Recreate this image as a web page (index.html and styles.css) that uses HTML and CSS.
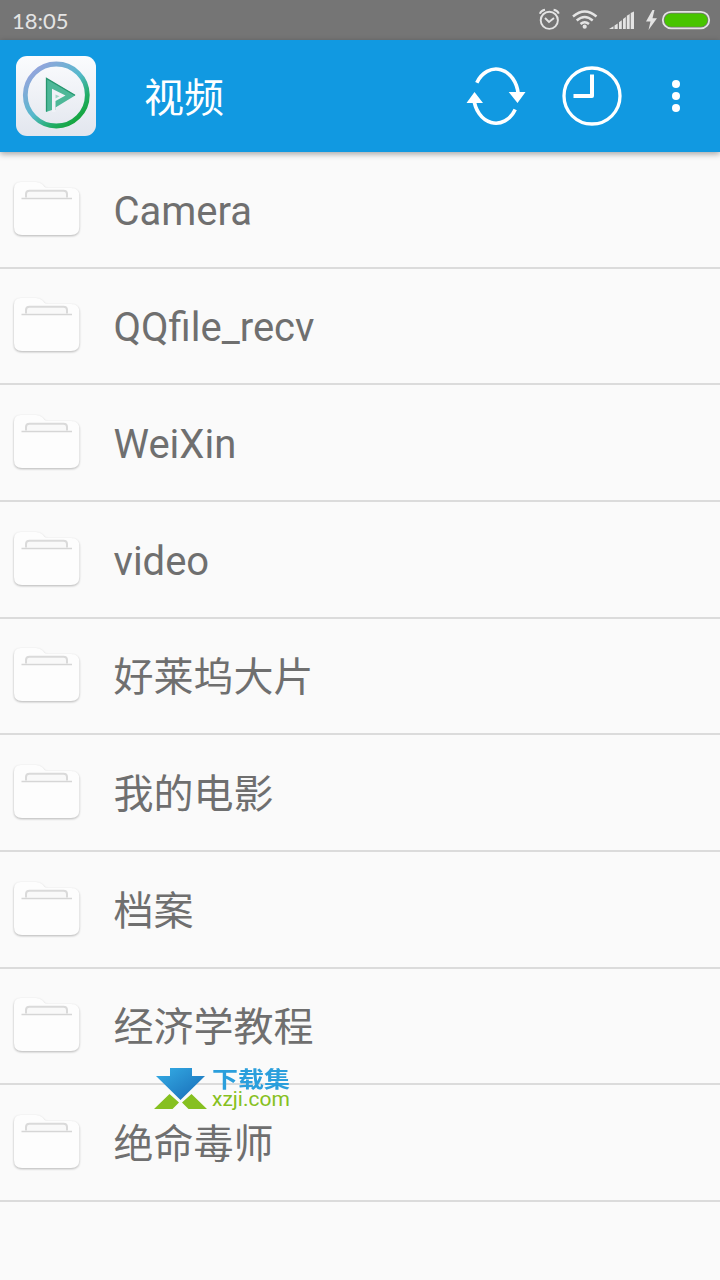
FILE: index.html
```html
<!DOCTYPE html>
<html lang="zh-CN">
<head>
    <meta charset="UTF-8">
    <meta name="viewport" content="width=device-width, initial-scale=1.0">
    <title>视频</title>
    <link rel="stylesheet" href="styles.css">
</head>
<body>
    <!-- shared folder icon -->
    <svg class="defs" width="0" height="0">
        <symbol id="folder" viewBox="0 0 72 62">
            <path d="M3 9Q3 2 10 2H25Q29 2 32 5L33.500 7Q35 8 37 8H60Q68.300 8 68.300 16V47Q68.300 55 60 55H11Q3 55 3 47Z" fill="#fdfdfd"/>
            <path d="M15 17.500V14Q15 10.700 18.500 10.700H52.500Q56 10.700 56 14V17.500" fill="#f9f9f9" stroke="#dadada" stroke-width="2"/>
            <path d="M10.500 18.500H61" stroke="#d6d6d6" stroke-width="1.500"/>
        </symbol>
    </svg>

    <div class="status-bar">
        <span class="time">18:05</span>
        <div class="status-icons">
            <svg width="181" height="40" viewBox="539 0 181 40" fill="none" stroke="#e4e4e4">
                <circle cx="549.300" cy="20.300" r="8.600" stroke-width="1.900"/>
                <path d="M545 18l4 4 5-4" stroke-width="1.900"/>
                <path d="M539.800 13.700Q541 10.500 545 9.800M553.600 9.800Q557.600 10.500 558.800 13.700" stroke-width="1.900"/>
                <path d="M573 16.500Q584.700 6.500 596.500 16.500M576.700 20.500Q584.700 13.500 592.700 20.500M580.500 24Q584.700 20.300 589 24" stroke-width="2.400"/>
                <circle cx="584.700" cy="26.700" r="2.100" fill="#e4e4e4" stroke="none"/>
                <path d="M609 29L613.500 26.300V29ZM614.500 29V25.500L617.700 23.500V29ZM619 29V22.300L621.800 20.300V29ZM623 29V19L625.800 17V29ZM626.800 29V15.800L629.700 14V29ZM630.700 29V13L634 11.500V29Z" fill="#e4e4e4" stroke="none"/>
                <path d="M652.500 10L646 21.500H650.500L648.500 30L657 18.300H652.500L654.500 10Z" fill="#e4e4e4" stroke="none"/>
                <rect x="662.800" y="11.800" width="46.400" height="16.600" rx="8.300" stroke-width="1.800"/>
                <rect x="664.500" y="13.500" width="43" height="13.200" rx="6.600" fill="#48c400" stroke="none"/>
            </svg>
        </div>
    </div>

    <header class="toolbar">
        <svg class="logo" width="80" height="80" viewBox="0 0 80 80">
            <defs>
                <linearGradient id="tile" x1="0" y1="0" x2="0" y2="1">
                    <stop offset="0" stop-color="#fbfcfe"/>
                    <stop offset="1" stop-color="#e2e6ee"/>
                </linearGradient>
                <linearGradient id="ring" x1="0.150" y1="0.100" x2="0.850" y2="0.900">
                    <stop offset="0" stop-color="#92a5dc"/>
                    <stop offset="0.500" stop-color="#55b9cc"/>
                    <stop offset="0.800" stop-color="#22ad68"/>
                    <stop offset="1" stop-color="#14a53d"/>
                </linearGradient>
            </defs>
            <rect width="80" height="80" rx="11" fill="url(#tile)"/>
            <circle cx="40.300" cy="39" r="31" fill="none" stroke="url(#ring)" stroke-width="4.800"/>
            <path d="M30 22L59.500 39.300L39.500 51.500V54H36L30 56Z" fill="#4db898"/>
            <path d="M36 32.800L49.500 39.600L39.500 45V56H36Z" fill="#f0f2f7"/>
            <path d="M39.500 38.500L43.500 40.300L39.500 42.500Z" fill="#9fd6c6"/>
            <path d="M30.500 55.500V22.500L59 39.200" fill="none" stroke="#27966f" stroke-width="1.300"/>
        </svg>
        <h1>视频</h1>
        <div class="actions">
            <svg width="60" height="60" viewBox="0 0 60 60" fill="none" stroke="#fff" stroke-width="3.600">
                <path d="M10.800 16.800A22.300 27.800 0 0 1 52.200 28"/>
                <path d="M49.200 43.500A22.300 27.800 0 0 1 7.800 32"/>
                <path d="M42.700 26H59.500L51.500 37ZM.500 37L8.500 26L17 37Z" fill="#fff" stroke="none"/>
            </svg>
            <svg width="60" height="60" viewBox="0 0 60 60" fill="none" stroke="#fff" stroke-width="3.300">
                <circle cx="30" cy="30" r="28"/>
                <path d="M30 8.500V30H11.500" stroke-width="4" stroke-linejoin="round"/>
            </svg>
            <svg class="more" width="8" height="32" viewBox="0 0 8 32" fill="#fff">
                <circle cx="4" cy="4" r="4"/>
                <circle cx="4" cy="16" r="4"/>
                <circle cx="4" cy="28" r="4"/>
            </svg>
        </div>
    </header>

    <ul class="folders">
        <li><svg class="folder"><use href="#folder"/></svg><span>Camera</span></li>
        <li><svg class="folder"><use href="#folder"/></svg><span>QQfile_recv</span></li>
        <li><svg class="folder"><use href="#folder"/></svg><span>WeiXin</span></li>
        <li><svg class="folder"><use href="#folder"/></svg><span>video</span></li>
        <li><svg class="folder"><use href="#folder"/></svg><span>好莱坞大片</span></li>
        <li><svg class="folder"><use href="#folder"/></svg><span>我的电影</span></li>
        <li><svg class="folder"><use href="#folder"/></svg><span>档案</span></li>
        <li><svg class="folder"><use href="#folder"/></svg><span>经济学教程</span></li>
        <li><svg class="folder"><use href="#folder"/></svg><span>绝命毒师</span></li>
    </ul>

    <div class="watermark">
        <svg width="54" height="44" viewBox="0 0 54 44">
            <defs>
                <linearGradient id="arrow" x1="0" y1="0" x2="1" y2="1">
                    <stop offset="0" stop-color="#35aee6"/>
                    <stop offset="1" stop-color="#1769b5"/>
                </linearGradient>
            </defs>
            <path d="M16 1H38V9H51L26.500 33L2 9H16Z" fill="url(#arrow)"/>
            <path d="M0 42L15.500 27L25 35.500L18.500 42ZM53 42L37.500 27L28 35.500L34.500 42Z" fill="#86c020"/>
        </svg>
        <div class="watermark-text">
            <span class="name">下载集</span>
            <span class="site">xzji.com</span>
        </div>
    </div>
</body>
</html>
```
FILE: styles.css
```css
* {
    box-sizing: border-box;
}

body {
    margin: 0;
    min-height: 1280px;
    position: relative;
    background-color: #fafafa;
    font-family: Roboto, "Noto Sans CJK SC", sans-serif;
    color: #6f6f6f;
}

svg {
    display: block;
    flex-shrink: 0;
}

.defs {
    position: absolute;
}

.status-bar {
    height: 40px;
    padding-left: 12px;
    display: flex;
    align-items: center;
    justify-content: space-between;
    background-color: #757575;
}

.time {
    font-family: Lato, sans-serif;
    font-size: 22px;
    line-height: 40px;
    padding-top: 1px;
    color: #e4e4e4;
}

.toolbar {
    height: 112px;
    padding: 0 40px 0 16px;
    display: flex;
    align-items: center;
    background-color: #1199e1;
    box-shadow: 0 2px 6px rgba(0, 0, 0, 0.35);
}

.toolbar h1 {
    margin: 0 0 0 48px;
    padding-top: 5px;
    font-size: 40px;
    font-weight: 400;
    line-height: 60px;
    color: #fff;
}

.actions {
    margin-left: auto;
    display: flex;
    align-items: center;
    gap: 36px;
}

.more {
    margin-left: 14px;
}

.folders {
    margin: 0;
    padding: 0;
    list-style: none;
}

.folders li {
    height: 116.67px;
    padding: 3px 0 0 11px;
    display: flex;
    align-items: center;
    border-bottom: 2px solid #dbdbdb;
}

.folder {
    width: 72px;
    height: 62px;
    filter: drop-shadow(0 1px 1.2px rgba(0, 0, 0, 0.28));
}

.folders span {
    margin-left: 30.5px;
    padding-top: 2px;
    font-size: 40px;
    line-height: 56px;
}

/* sits over the list */
.watermark {
    position: absolute;
    left: 154px;
    top: 1067px;
    display: flex;
    gap: 4px;
}

.watermark-text {
    display: flex;
    flex-direction: column;
}

.name {
    font-size: 26px;
    font-weight: 700;
    line-height: 24px;
    transform: scaleY(0.85);
    color: #2b9fdc;
}

.site {
    font-size: 21px;
    line-height: 16px;
    color: #86c020;
}
```
